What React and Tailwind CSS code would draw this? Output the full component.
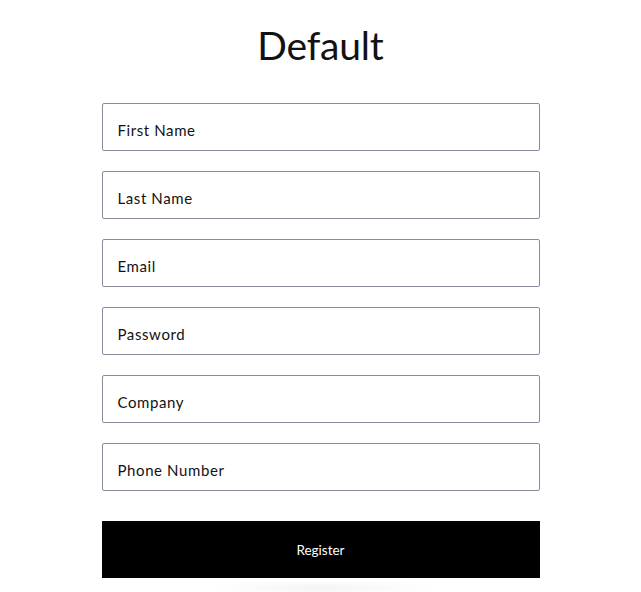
const fields = ['First Name', 'Last Name', 'Email', 'Password', 'Company', 'Phone Number'];

export default function App() {
  return (
    <div className="min-h-screen bg-white font-['Lato',sans-serif] text-[#121212]">
      <div className="mx-auto flex w-[438px] flex-col pt-[19px]">
        <h1 className="text-center text-[39px] leading-[52px] tracking-[-0.005em]">Default</h1>
        <form className="mt-[32px] flex flex-col gap-5" onSubmit={(e) => e.preventDefault()}>
          {fields.map((f) => (
            <label
              key={f}
              className="flex h-12 items-center rounded-[2px] border border-[#8e8a9b] px-[15px] pt-[6px] text-[15px] tracking-[0.04em]"
            >
              {f}
            </label>
          ))}
          <button
            type="submit"
            className="mt-[10px] h-[57px] w-full bg-black pt-[2px] text-[13.5px] text-white"
          >
            Register
          </button>
        </form>
        <div className="mx-auto mt-[2px] h-[16px] w-[230px] bg-[radial-gradient(ellipse_at_center,#f4f4f4,#ffffff_70%)]" />
      </div>
    </div>
  );
}
